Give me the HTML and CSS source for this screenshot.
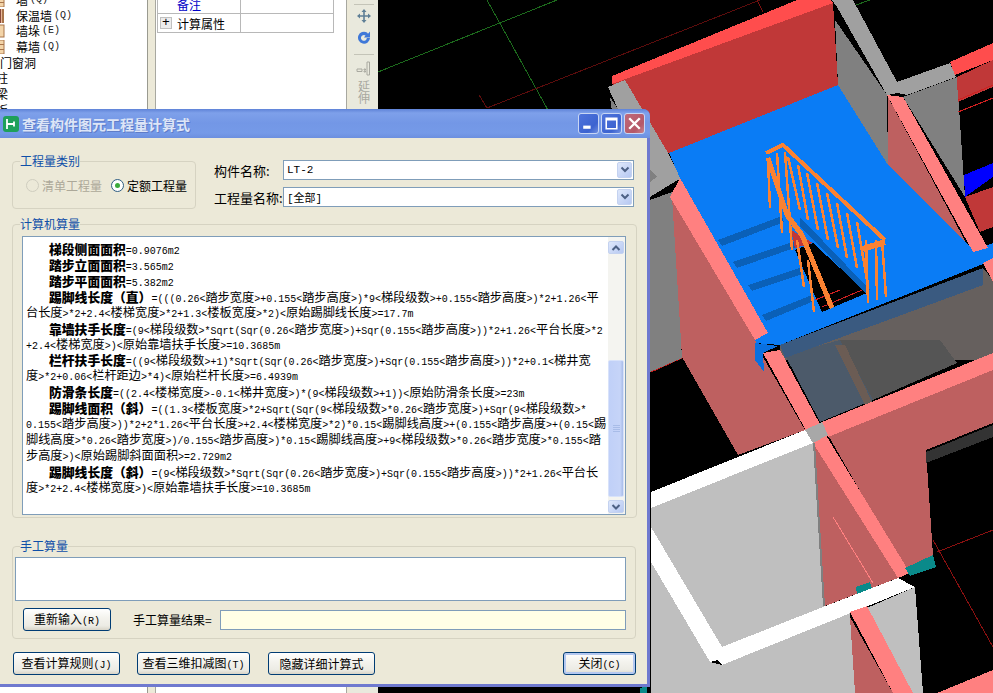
FILE: index.html
```html
<!DOCTYPE html>
<html lang="zh">
<head>
<meta charset="utf-8">
<title>查看构件图元工程量计算式</title>
<link rel="stylesheet" href="styles.css">
</head>
<body>
<div class="app">
  <nav class="tree">
    <div class="node leaf"><svg class="brick" viewBox="0 0 16 14"><use href="#brick"/></svg>墙<i>(Q)</i></div>
    <div class="node leaf"><svg class="brick" viewBox="0 0 16 14"><use href="#insul"/></svg>保温墙<i>(Q)</i></div>
    <div class="node leaf"><svg class="brick" viewBox="0 0 16 14"><use href="#pier"/></svg>墙垛<i>(E)</i></div>
    <div class="node leaf"><svg class="brick" viewBox="0 0 16 14"><use href="#brick"/></svg>幕墙<i>(Q)</i></div>
    <div class="node group">门窗洞</div>
    <div class="node group shift">柱</div>
    <div class="node group shift">梁</div>
    <div class="node group shift">板</div>
  </nav>
  <div class="gutter"></div>
  <section class="props">
    <div class="prop-row first"><span class="prop-name blue">备注</span><span class="prop-val"></span></div>
    <div class="prop-row"><span class="prop-name"><span class="plus">+</span>计算属性</span><span class="prop-val"></span></div>
  </section>
  <div class="gutter thin"></div>
  <aside class="toolbar">
    <hr class="tool-sep">
    <svg class="tool" viewBox="0 0 16 16"><path d="M8 1 5.500 4h1.700v3.200H4V5.500L1 8l3 2.500V8.800h3.200V12H5.500L8 15l2.500-3H8.800V8.800H12v1.700L15 8l-3-2.500v1.700H8.800V4h1.700z" fill="#5f7f96"/></svg>
    <svg class="tool" viewBox="0 0 16 16"><path d="M11 2.500A6 6 0 1 0 14 8h-3.200A2.900 2.900 0 1 1 9.500 5.500L8 7.500h6V1.500l-2 2.200z" fill="#3f78d8"/></svg>
    <hr class="tool-sep low">
    <svg class="tool ext" viewBox="0 0 16 16"><path d="M1 8h5v2.500H1zM8 8h1.500v1H8zM8 10h1.500v1H8zM11 1h2.500v13H11z" fill="none" stroke="#a9a9a0"/></svg>
    <span class="tool-text">延</span>
    <span class="tool-text">伸</span>
  </aside>
  <svg class="scene" viewBox="378 0 615 693" preserveAspectRatio="none">
    <rect x="378" y="0" width="615" height="693" fill="#000"/>
    <g fill="none" stroke-width="1">
      <path d="M378 72 557 0M487 0 549 112" stroke="#1c6a1c"/>
      <path d="M479 95 487 108M487 108 760 0" stroke="#5c0c0c"/>
      <path d="M757 0 763 12" stroke="#7a1010"/>
      <path d="M853 6 870 0" stroke="#1c6a1c"/>
      <path d="M933 540 993 647M937 552 993 530" stroke="#8a1010"/>
      <path d="M651 372 682 358" stroke="#c01818"/>
    </g>
    <!-- back wall -->
    <path fill="#c03838" d="M612 82 833 3 838 85 669 153 640 130z"/>
    <path fill="#ff4d4d" d="M612 76 797 0 830 0 833 3 612 84z"/>
    <path fill="#a0a0a0" d="M608 87 625 80 668 153 681 178 650 197 650 180z"/>
    <path fill="#808080" d="M610 97 620 112 612 112z"/>
    <path fill="#808080" d="M650 170 657 177 650 182z"/>
    <path fill="#808080" d="M650 200 672 192 682 358 650 372z"/>
    <!-- side walls right -->
    <path fill="#808080" d="M835 20 838 85 888 167 887 95z"/>
    <path fill="#a0a0a0" d="M832 0 853 0 897 82 950 63 956 77 907 95 897 93 887 95 837 7z"/>
    <path fill="#808080" d="M903 97 957 77 965 197z"/>
    <path fill="#ff4d4d" d="M950 62 993 43 993 60 955 75z"/>
    <path fill="#c03838" d="M957 77 993 60 993 87 958 102z"/>
    <path fill="#0000ff" d="M964 175 993 163 993 177 965 197z"/>
    <path fill="#c03838" d="M965 197 993 187 993 227 980 232z"/>
    <path d="M958 112 993 98M958 100 993 85" stroke="#d02020" fill="none"/>
    <path fill="#be6060" d="M888 97 970 250 888 165z"/>
    <!-- interior under slab -->
    <path fill="#66605e" d="M780 345 983 268 993 280 993 360 780 360z"/>
    <path fill="#555555" d="M840 340 940 340 957 363 873 400z"/>
    <path fill="#4c5a6a" d="M785 355 840 340 873 400 820 422z"/>
    <path fill="#6b5c54" d="M835 345 845 345 872 402 865 405z"/>
    <path fill="#3a5a80" d="M780 345 983 268 983 285 785 358z"/>
    <!-- floor -->
    <path fill="#0a7cf5" d="M669 153 838 85 888 165 973 250 993 243 993 260 780 345 755 343 680 178z"/>
    <path fill="#0a60b8" d="M718 240 782 216 784 222 722 246zM733 262 798 240 800 246 737 268zM748 285 800 268 802 274 752 291zM762 315 812 295 814 301 766 321z"/>
    <path fill="#000" d="M795 250 813 243 867 293 822 312z"/>
    <path fill="#0a60b8" d="M800 217 870 290 865 293 800 226z"/>
    <path d="M815 300 840 290M822 307 862 290" stroke="#d02020" fill="none"/>
    <path fill="#c03838" d="M791 230 813 243 795 248z"/>
    <!-- stair rail -->
    <g fill="none" stroke="#fa8232" stroke-linecap="butt">
      <path stroke-width="4" d="M766 153 783 145 885 240"/>
      <path stroke-width="6" d="M863 249 885 242"/>
      <path stroke-width="5" d="M768 158 787 215 802 235 832 308"/>
      <g stroke-width="2.500">
        <path d="M768 160 770 208M777 153 782 233M785 152 792 250M788 157 800 210M798 165 808 220"/>
        <path d="M807 173 818 230M817 183 828 240M827 193 838 248M837 203 847 258M847 213 857 268M857 222 867 280"/>
        <path d="M866 240 868 303M876 240 877 300M882 240 886 297"/>
        <path d="M797 240 804 287M808 260 814 312"/>
      </g>
    </g>
    <!-- pink strips -->
    <path fill="#be6060" d="M672 197 755 340 763 357 805 430 738 455 682 357z"/>
    <path fill="#ff8080" d="M680 178 768 333 755 340 670 197z"/>
    <path fill="#ff8080" d="M887 95 903 97 988 248 973 252z"/>
    <path fill="#0a70e0" d="M755 343 778 346 763 353 764 372 755 360z"/>
    <path fill="#be6060" d="M828 435 993 370 993 423 926 450 933 555 905 570z"/>
    <path fill="#be6060" d="M813 443 898 578 825 606z"/>
    <path fill="#ff8080" d="M763 353 780 350 827 437 910 573 898 578 813 443z"/>
    <path fill="#ff8080" d="M822 422 993 353 993 370 828 437z"/>
    <path fill="#ff8080" d="M983 263 993 258 993 282z"/>
    <path fill="#a8a8a8" d="M805 430 822 422 828 435 813 443z"/>
    <path fill="#333333" d="M926 452 993 425 993 437 926 463z"/>
    <!-- light slabs -->
    <path fill="#bfbfbf" d="M651 508 813 443 824 607 722 647 651 527z"/>
    <path fill="#808080" d="M813 443 815 443 825 606 823 606z"/>
    <path fill="#fff" d="M651 492 805 430 813 443 651 508z"/>
    <path fill="#bfbfbf" d="M651 562 710 662 722 665 850 613 855 693 651 693z"/>
    <path fill="#fff" d="M651 527 722 647 823 607 898 578 915 587 722 665 718 660 710 662 651 562z"/>
    <path fill="#bfbfbf" d="M867 608 915 587 923 693 913 693z"/>
    <path fill="#be6060" d="M850 617 893 693 855 693z"/>
    <path fill="#ff8080" d="M850 612 867 606 913 693 893 693z"/>
    <path fill="#ff8080" d="M937 693 993 670 993 693z"/>
    <path d="M833 517 873 583" stroke="#ff8080" fill="none"/>
    <path fill="#0a8a8a" d="M905 568 933 555 936 567 910 576zM856 587 870 582 872 588 857 594z"/>
    <path fill="#0a8a8a" d="M640 688 647 686 647 693 640 693z"/>
  </svg>
</div>

<div class="dialog">
  <header class="titlebar">
    <span class="app-icon"><svg viewBox="0 0 16 16"><path d="M4 3v10M4 8h7M11 5.500v5" stroke="#fff" stroke-width="1.800" fill="none"/></svg></span>
    <h1 class="title">查看构件图元工程量计算式</h1>
    <span class="win-btn"><svg viewBox="0 0 18 18"><rect x="4" y="11" width="7" height="3" fill="#fff"/></svg></span>
    <span class="win-btn"><svg viewBox="0 0 18 18"><path d="M4 4h10v10H4zM4 5.500h10" fill="none" stroke="#fff" stroke-width="1.500"/></svg></span>
    <span class="win-btn close"><svg viewBox="0 0 18 18"><path d="M4 4l10 10M14 4 4 14" stroke="#fff" stroke-width="2.200"/></svg></span>
  </header>
  <div class="client">
    <div class="top-row">
      <fieldset class="box kind">
        <legend>工程量类别</legend>
        <label class="radio off"><span class="dot"></span>清单工程量</label>
        <label class="radio"><span class="dot on"></span>定额工程量</label>
      </fieldset>
      <div class="fields">
        <div class="field"><span class="field-label">构件名称:</span><span class="combo"><span class="combo-text">LT-2</span><span class="combo-btn"><svg viewBox="0 0 10 8"><path d="M1.500 1.500 5 5l3.500-3.500" fill="none" stroke="#4d6185" stroke-width="2"/></svg></span></span></div>
        <div class="field"><span class="field-label">工程量名称:</span><span class="combo"><span class="combo-text">[全部]</span><span class="combo-btn"><svg viewBox="0 0 10 8"><path d="M1.500 1.500 5 5l3.500-3.500" fill="none" stroke="#4d6185" stroke-width="2"/></svg></span></span></div>
      </div>
    </div>

    <fieldset class="box calc">
      <legend>计算机算量</legend>
      <div class="memo">
        <div class="formula">
          <p class="in"><b>梯段侧面面积</b><i>=0.9076m2</i></p>
          <p class="in"><b>踏步立面面积</b><i>=3.565m2</i></p>
          <p class="in"><b>踏步平面面积</b><i>=5.382m2</i></p>
          <p class="in"><b>踢脚线长度（直）</b><i>=(((0.26&lt;</i>踏步宽度<i>&gt;+0.155&lt;</i>踏步高度<i>&gt;)*9&lt;</i>梯段级数<i>&gt;+0.155&lt;</i>踏步高度<i>&gt;)*2+1.26&lt;</i>平</p>
          <p>台长度<i>&gt;*2+2.4&lt;</i>楼梯宽度<i>&gt;*2+1.3&lt;</i>楼板宽度<i>&gt;*2)&lt;</i>原始踢脚线长度<i>&gt;=17.7m</i></p>
          <p class="in"><b>靠墙扶手长度</b><i>=(9&lt;</i>梯段级数<i>&gt;*Sqrt(Sqr(0.26&lt;</i>踏步宽度<i>&gt;)+Sqr(0.155&lt;</i>踏步高度<i>&gt;))*2+1.26&lt;</i>平台长度<i>&gt;*2</i></p>
          <p><i>+2.4&lt;</i>楼梯宽度<i>&gt;)&lt;</i>原始靠墙扶手长度<i>&gt;=10.3685m</i></p>
          <p class="in"><b>栏杆扶手长度</b><i>=((9&lt;</i>梯段级数<i>&gt;+1)*Sqrt(Sqr(0.26&lt;</i>踏步宽度<i>&gt;)+Sqr(0.155&lt;</i>踏步高度<i>&gt;))*2+0.1&lt;</i>梯井宽</p>
          <p>度<i>&gt;*2+0.06&lt;</i>栏杆距边<i>&gt;*4)&lt;</i>原始栏杆长度<i>&gt;=6.4939m</i></p>
          <p class="in"><b>防滑条长度</b><i>=((2.4&lt;</i>楼梯宽度<i>&gt;-0.1&lt;</i>梯井宽度<i>&gt;)*(9&lt;</i>梯段级数<i>&gt;+1))&lt;</i>原始防滑条长度<i>&gt;=23m</i></p>
          <p class="in"><b>踢脚线面积（斜）</b><i>=((1.3&lt;</i>楼板宽度<i>&gt;*2+Sqrt(Sqr(9&lt;</i>梯段级数<i>&gt;*0.26&lt;</i>踏步宽度<i>&gt;)+Sqr(9&lt;</i>梯段级数<i>&gt;*</i></p>
          <p><i>0.155&lt;</i>踏步高度<i>&gt;))*2+2*1.26&lt;</i>平台长度<i>&gt;+2.4&lt;</i>楼梯宽度<i>&gt;*2)*0.15&lt;</i>踢脚线高度<i>&gt;+(0.155&lt;</i>踏步高度<i>&gt;+(0.15&lt;</i>踢</p>
          <p>脚线高度<i>&gt;*0.26&lt;</i>踏步宽度<i>&gt;)/0.155&lt;</i>踏步高度<i>&gt;)*0.15&lt;</i>踢脚线高度<i>&gt;+9&lt;</i>梯段级数<i>&gt;*0.26&lt;</i>踏步宽度<i>&gt;*0.155&lt;</i>踏</p>
          <p>步高度<i>&gt;)&lt;</i>原始踢脚斜面面积<i>&gt;=2.729m2</i></p>
          <p class="in"><b>踢脚线长度（斜）</b><i>=(9&lt;</i>梯段级数<i>&gt;*Sqrt(Sqr(0.26&lt;</i>踏步宽度<i>&gt;)+Sqr(0.155&lt;</i>踏步高度<i>&gt;))*2+1.26&lt;</i>平台长</p>
          <p>度<i>&gt;*2+2.4&lt;</i>楼梯宽度<i>&gt;)&lt;</i>原始靠墙扶手长度<i>&gt;=10.3685m</i></p>
        </div>
        <div class="scrollbar">
          <span class="sb-btn"><svg viewBox="0 0 10 8"><path d="M1.500 6 5 2.500 8.500 6" fill="none" stroke="#4d6185" stroke-width="2"/></svg></span>
          <span class="sb-track"><span class="sb-thumb"><span class="grip"></span></span></span>
          <span class="sb-btn"><svg viewBox="0 0 10 8"><path d="M1.500 2 5 5.500 8.500 2" fill="none" stroke="#4d6185" stroke-width="2"/></svg></span>
        </div>
      </div>
    </fieldset>

    <fieldset class="box manual">
      <legend>手工算量</legend>
      <div class="manual-area"></div>
      <div class="manual-row">
        <button class="btn redo">重新输入<i>(R)</i></button>
        <span class="result-label">手工算量结果=</span>
        <span class="result"></span>
      </div>
    </fieldset>

    <div class="actions">
      <button class="btn a1">查看计算规则<i>(J)</i></button>
      <button class="btn a2">查看三维扣减图<i>(T)</i></button>
      <button class="btn a3">隐藏详细计算式</button>
      <button class="btn a4 default">关闭<i>(C)</i></button>
    </div>
  </div>
</div>

<svg class="defs" width="0" height="0">
  <defs>
    <g id="brick">
      <rect x="-6" y="0" width="16" height="14" fill="#f3d4a8" stroke="#a8744a"/>
      <path d="M-6 4.500H10M-6 9.500H10M3 0v4.500M-1 4.500v5M3 9.500V14" stroke="#a8744a" fill="none"/>
    </g>
    <g id="insul">
      <rect x="-6" y="0" width="16" height="14" fill="#e8b89a"/>
      <path d="M2 0v14M6 0v14" stroke="#8a4a3a" stroke-width="2"/>
      <path d="M9 0v14" stroke="#a8744a" stroke-width="2"/>
    </g>
    <g id="pier">
      <rect x="-6" y="1" width="16" height="12" fill="#f3d4a8" stroke="#a8744a"/>
      <path d="M5 1v12" stroke="#a8744a" stroke-width="2"/>
      <path d="M-6 6H5" stroke="#a8744a"/>
    </g>
  </defs>
</svg>
</body>
</html>
```
FILE: styles.css
```css
* { box-sizing: border-box; }
html, body { margin: 0; height: 100%; overflow: hidden; }
body {
  width: 993px;
  height: 693px;
  position: relative;
  font-family: "Noto Sans CJK SC", sans-serif;
  font-size: 12px;
  color: #000;
  background: #ece9d8;
}
i { font-style: normal; }
.defs { position: absolute; }

.app { display: flex; height: 693px; }

/* background: tree */
.tree {
  width: 148px;
  height: 693px;
  flex: none;
  background: #fff;
  border-right: 1px solid #9a9a90;
  overflow: hidden;
  font-size: 12px;
}
.node { height: 15.7px; line-height: 15.7px; white-space: nowrap; display: flex; align-items: center; }
.node:first-child { margin-top: -8px; }
.node i { font-family: "Liberation Mono", monospace; font-size: 10px; margin-left: 2px; color: #222; }
.brick { width: 16px; height: 14px; flex: none; margin-left: -6px; margin-right: 6px; }
.group.shift { margin-left: -4px; }

.gutter { width: 7px; flex: none; background: #ece9d8; }
.gutter.thin { width: 3px; }

/* background: properties */
.props {
  width: 192px;
  flex: none;
  background: #fff;
  border-left: 1px solid #a8a8a0;
  border-right: 1px solid #a8a8a0;
  padding: 0 12px 0 1px;
}
.prop-row {
  display: flex;
  height: 19px;
  border: 1px solid #b8b8b8;
  border-top: 0;
  align-items: center;
}
.prop-row.first { height: 14px; align-items: flex-end; }
.prop-name {
  width: 83px;
  height: 100%;
  border-right: 1px solid #b8b8b8;
  padding-left: 19px;
  display: flex;
  align-items: center;
  position: relative;
  white-space: nowrap;
}
.prop-name.blue { color: #0000c8; line-height: 1; padding-bottom: 4px; }
.prop-val { flex: 1; }
.plus {
  width: 12px;
  height: 12px;
  border: 1px solid #c0c0c0;
  background: #ececec;
  font: 13px/10px "Liberation Mono", monospace;
  text-align: center;
  position: absolute;
  left: 2px;
  top: 3px;
}

/* background: toolbar */
.toolbar {
  width: 28px;
  flex: none;
  background: #e9e9dd;
  display: flex;
  flex-direction: column;
  align-items: center;
  padding-top: 4px;
}
.tool-sep { width: 20px; margin: 0 0 3px; border: 0; border-top: 1px solid #c4c4b8; height: 0; }
.tool { width: 16px; height: 16px; margin-bottom: 6px; flex: none; }
.tool-sep.low { margin-top: 2px; margin-bottom: 6px; }
.tool.ext { margin-bottom: 3px; }
.tool-text { color: #a8a8a0; font-size: 12px; line-height: 12px; }

.scene { flex: 1; height: 693px; display: block; shape-rendering: crispEdges; }

/* dialog window */
.dialog {
  position: absolute;
  left: -4px;
  top: 109px;
  width: 654px;
  height: 578px;
  background: #6f79cf;
  border-radius: 7px 7px 0 0;
  padding: 0 3px 3px 4px;
  display: flex;
  flex-direction: column;
}
.titlebar {
  height: 29px;
  flex: none;
  display: flex;
  align-items: center;
  margin: 0 -3px 0 -4px;
  padding: 0 5px 0 7px;
  border-radius: 7px 7px 0 0;
  background: linear-gradient(#5f83d8 0, #7ea0ea 4px, #7397e6 14px, #759ae8 24px, #6c8fdf 29px);
}
.app-icon {
  width: 16px;
  height: 16px;
  background: #1fa05a;
  border-radius: 3px;
  flex: none;
  display: block;
}
.app-icon svg { display: block; }
.title {
  margin: 0 0 0 3px;
  flex: 1;
  font-size: 14px;
  font-weight: 700;
  line-height: 28px;
  color: #dde5f7;
  white-space: nowrap;
  text-shadow: 1px 1px 0 #5f7cc8;
}
.win-btn {
  width: 21px;
  height: 21px;
  margin-left: 2px;
  border-radius: 3px;
  border: 1px solid #c8d6f4;
  background: linear-gradient(135deg, #4f74dc, #3c63d0 70%, #6f8ee0);
  flex: none;
  display: block;
}
.win-btn svg { display: block; width: 19px; height: 19px; }
.win-btn.close { background: linear-gradient(135deg, #c06a7a, #b55868 70%, #c88590); }

.client {
  flex: 1;
  background: #ece9d8;
  padding: 0 13px 0 16px;
  display: flex;
  flex-direction: column;
  min-height: 0;
}

legend {
  padding: 0;
  color: #0f4fa8;
  font-size: 12px;
  line-height: 14px;
  height: 14px;
}
.box {
  margin: 0;
  padding: 0;
  min-width: 0;
  border: 1px solid #d6d3c2;
  border-radius: 4px;
}

.top-row { display: flex; height: 72px; padding-top: 16px; margin-left: -4px; }
.kind {
  width: 189px;
  height: 55px;
  display: flex;
  flex-direction: row;
  align-items: flex-start;
  padding: 9px 0 0 13px;
}
.kind legend { margin-left: -6px; }
.radio { display: flex; align-items: center; height: 16px; margin-right: 9px; white-space: nowrap; }
.radio.off { color: #aca899; }
.dot {
  width: 13px;
  height: 13px;
  border-radius: 50%;
  border: 1px solid #2f5d82;
  background: #fff;
  margin-right: 3px;
  flex: none;
  display: block;
  position: relative;
}
.radio.off .dot { border-color: #cfcdbf; background: #ece9d8; }
.dot.on::after {
  content: "";
  position: absolute;
  left: 3px;
  top: 3px;
  width: 5px;
  height: 5px;
  border-radius: 50%;
  background: #3caa3c;
}
.fields { margin-left: 18px; margin-top: 6px; width: 421px; display: flex; flex-direction: column; gap: 7px; }
.field { display: flex; align-items: center; height: 20px; }
.field-label { width: 69px; flex: none; font-size: 13px; white-space: nowrap; }
.combo {
  width: 351px;
  height: 20px;
  background: #fff;
  border: 1px solid #7f9db9;
  display: flex;
  align-items: center;
  justify-content: space-between;
  padding: 1px;
}
.combo-text { font: 11px "Liberation Mono", "Noto Sans CJK SC", monospace; padding-left: 2px; }
.combo-btn, .sb-btn {
  width: 15px;
  height: 16px;
  border-radius: 2px;
  background: linear-gradient(135deg, #dfe8fb, #b6c8f2);
  border: 1px solid #c4d2f0;
  display: flex;
  align-items: center;
  justify-content: center;
}
.combo-btn svg, .sb-btn svg { width: 10px; height: 8px; }

.calc { height: 301px; margin-left: -4px; margin-top: 7px; padding: 0 0 0 9px; width: 625px; }
.calc legend { margin-left: -2px; }
.memo {
  width: 604px;
  height: 279px;
  margin-top: 5px;
  background: #fff;
  border: 1px solid #7f9db9;
  display: flex;
  overflow: hidden;
}
.formula { flex: 1; padding: 4px 0 0 3px; min-width: 0; }
.formula p {
  margin: 0;
  height: 15.93px;
  line-height: 15.93px;
  font-size: 12.2px;
  white-space: nowrap;
}
.formula p.in { padding-left: 23px; }
.formula b { font-weight: 900; font-size: 12.8px; }
.formula i { font-family: "Liberation Mono", monospace; font-size: 10px; }

.scrollbar {
  width: 17px;
  flex: none;
  background: #f4f4f0;
  display: flex;
  flex-direction: column;
  padding: 4px 1px 1px 0;
}
.sb-btn { width: 16px; height: 13px; flex: none; }
.sb-track { flex: 1; display: flex; flex-direction: column; justify-content: flex-end; padding-bottom: 3px; }
.sb-thumb {
  height: 137px;
  width: 16px;
  background: linear-gradient(90deg, #c0d0f8, #c6d4f8 80%, #a8bce8);
  border: 1px solid #d8e2fa;
  border-radius: 2px;
  display: flex;
  align-items: center;
  justify-content: center;
}
.grip {
  width: 7px;
  height: 7px;
  background: repeating-linear-gradient(#a8bce8 0 1px, transparent 1px 2px);
  display: block;
}

.manual { height: 100px; margin-top: 21px; margin-left: -4px; width: 624px; padding: 0 0 0 2px; }
.manual legend { margin-left: 5px; }
.manual-area { width: 611px; height: 44px; margin-top: 4px; background: #fff; border: 1px solid #7f9db9; }
.manual-row { display: flex; align-items: center; margin-top: 7px; height: 23px; }
.btn {
  height: 23px;
  padding: 0;
  border: 1px solid #003c74;
  border-radius: 3px;
  background: linear-gradient(#fff, #f4f3ee 40%, #ecebe4 80%, #d8d4c8);
  font-family: "Noto Sans CJK SC", sans-serif;
  font-size: 12px;
  line-height: 20px;
  color: #000;
  white-space: nowrap;
  flex: none;
}
.btn i { font-family: "Liberation Mono", monospace; font-size: 10px; }
.redo { width: 88px; margin-left: 8px; }
.result-label { margin-left: 22px; width: 87px; flex: none; white-space: nowrap; }
.result { width: 406px; height: 20px; background: #ffffe6; border: 1px solid #7f9db9; }

.actions { display: flex; margin-top: 13px; margin-left: -3px; }
.a1 { width: 107px; }
.a2 { width: 113px; margin-left: 17px; }
.a3 { width: 107px; margin-left: 18px; }
.a4 { width: 73px; margin-left: 188px; }
.btn.default { box-shadow: inset 0 0 0 2px #b4c8f0; }
```
